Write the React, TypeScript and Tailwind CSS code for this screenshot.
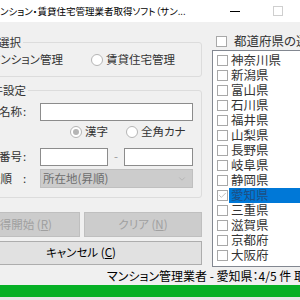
import { ChevronDown, Check } from "lucide-react";

const PREFS = ["神奈川県", "新潟県", "富山県", "石川県", "福井県", "山梨県", "長野県", "岐阜県", "静岡県", "愛知県", "三重県", "滋賀県", "京都府", "大阪府"];

function Radio({ checked, label, className = "" }: { checked?: boolean; label: string; className?: string }) {
  return (
    <label className={`flex items-center gap-[3px] ${className}`}>
      <span className="w-[12px] h-[12px] rounded-full border border-[#b5b5b5] bg-white flex items-center justify-center shrink-0">
        {checked && <span className="w-[6px] h-[6px] rounded-full bg-[#b5b5b5]" />}
      </span>
      <span>{label}</span>
    </label>
  );
}

function Box({ checked }: { checked?: boolean }) {
  return (
    <span className="w-[11px] h-[11px] border border-[#a8a8a8] bg-white flex items-center justify-center shrink-0">
      {checked && <Check className="w-[9px] h-[9px] text-[#a8a8a8]" strokeWidth={2} />}
    </span>
  );
}

function Label({ text, pad = "" }: { text: string; pad?: string }) {
  return (
    <>
      <span className={`w-[53px] text-right whitespace-nowrap ${pad}`}>{text}</span>
      <span className="w-[18px] pl-[1px]">:</span>
    </>
  );
}

export default function App() {
  return (
    <div className="w-[300px] h-[300px] overflow-hidden bg-[#f0f0f0] flex flex-col font-['Noto_Sans_CJK_JP',sans-serif] [font-feature-settings:'palt'] text-[11.5px] text-[#333]">
      {/* Title bar */}
      <div className="h-[22px] bg-white flex items-center shrink-0">
        <span className="w-[230px] overflow-hidden text-[9.5px] text-black whitespace-nowrap">ンション・賃貸住宅管理業者取得ソフト（サン...</span>
        <span className="w-[10px] h-px bg-black" />
        <span className="ml-[33px] w-[10px] h-[10px] border border-[#cfcfcf]" />
      </div>

      <div className="flex flex-1 min-h-0">
        {/* Left column */}
        <div className="-ml-[40px] w-[242px] shrink-0 flex flex-col">
          <fieldset className="mt-[12px] border border-[#dcdcdc] rounded-[3px] pl-[14px] pr-[8px] pt-[2px] pb-[8px]">
            <legend className="-ml-[2px] px-[2px] h-[16px] leading-[16px]">対象選択</legend>
            <div className="flex items-center h-[16px]">
              <Radio checked label="マンション管理" />
              <Radio label="賃貸住宅管理" className="ml-[28px]" />
            </div>
          </fieldset>

          <fieldset className="mt-[5px] border border-[#dcdcdc] rounded-[3px] px-[8px] pt-[5px] pb-[9px]">
            <legend className="ml-[9px] px-[2px] h-[16px] leading-[16px]">条件設定</legend>
            <div className="flex items-center">
              <Label text="業者名称" />
              <span className="flex-1 h-[18px] bg-white border border-[#8c8c8c]" />
            </div>
            <div className="flex items-center h-[16px] mt-[3px]">
              <Radio checked label="漢字" className="ml-[101px]" />
              <Radio label="全角カナ" className="ml-[18px]" />
            </div>
            <div className="flex items-center mt-[8px]">
              <Label text="登録番号" />
              <span className="w-[68px] h-[18px] bg-white border border-[#8c8c8c]" />
              <span className="flex-1 text-center text-[#999]">-</span>
              <span className="w-[69px] h-[18px] bg-white border border-[#8c8c8c]" />
            </div>
            <div className="flex items-center mt-[3px]">
              <Label text="表示順" pad="pr-[10px]" />
              <span className="flex-1 h-[19px] bg-[#cccccc] border border-[#bfbfbf] flex items-center pl-[2px] pr-[5px] text-[#6d6d6d]">
                所在地(昇順)
                <ChevronDown className="ml-auto w-[10px] h-[10px] text-[#a6a6a6]" strokeWidth={1.5} />
              </span>
            </div>
          </fieldset>

          <div className="flex gap-[4px] mt-[14px]">
            <button className="w-[120px] h-[25px] bg-[#cccccc] border border-[#bfbfbf] text-[#a0a0a0]">
              取得開始 (<span className="underline">R</span>)
            </button>
            <button className="flex-1 h-[25px] bg-[#cccccc] border border-[#bfbfbf] text-[#a0a0a0]">
              クリア (<span className="underline">N</span>)
            </button>
          </div>
          <button className="mt-[4px] h-[24px] bg-[#e1e1e1] border border-[#adadad] text-black">
            キャンセル (<span className="underline">C</span>)
          </button>
        </div>

        {/* Right column */}
        <div className="ml-[10px] w-[120px] shrink-0 flex flex-col text-[12.5px]">
          <div className="flex items-center h-[16px] mt-[11px] pl-[4px] gap-[7px] whitespace-nowrap">
            <Box />
            <span>都道府県の選択</span>
          </div>
          <div className="mt-[1px] flex-1 bg-white border border-[#828790] pt-[2px] overflow-hidden">
            {PREFS.map((p) => {
              const sel = p === "愛知県";
              return (
                <div key={p} className="flex items-center h-[15px] pl-[4px] whitespace-nowrap">
                  <Box checked={sel} />
                  <span className={`ml-[1px] pl-[2px] flex-1 h-full flex items-center ${sel ? "bg-[#0078d7] text-[#1d4f85]" : ""}`}>{p}</span>
                </div>
              );
            })}
          </div>
        </div>
      </div>

      {/* Status bar */}
      <div className="h-[18px] shrink-0 flex items-center pl-[107px] whitespace-nowrap text-[12px] text-black">
        マンション管理業者 - 愛知県：4/5 件 取得中...
      </div>
      <div className="h-[12px] shrink-0 bg-[#06b025]" />
      <div className="h-[3px] shrink-0 bg-[#e6e6e6]" />
    </div>
  );
}
